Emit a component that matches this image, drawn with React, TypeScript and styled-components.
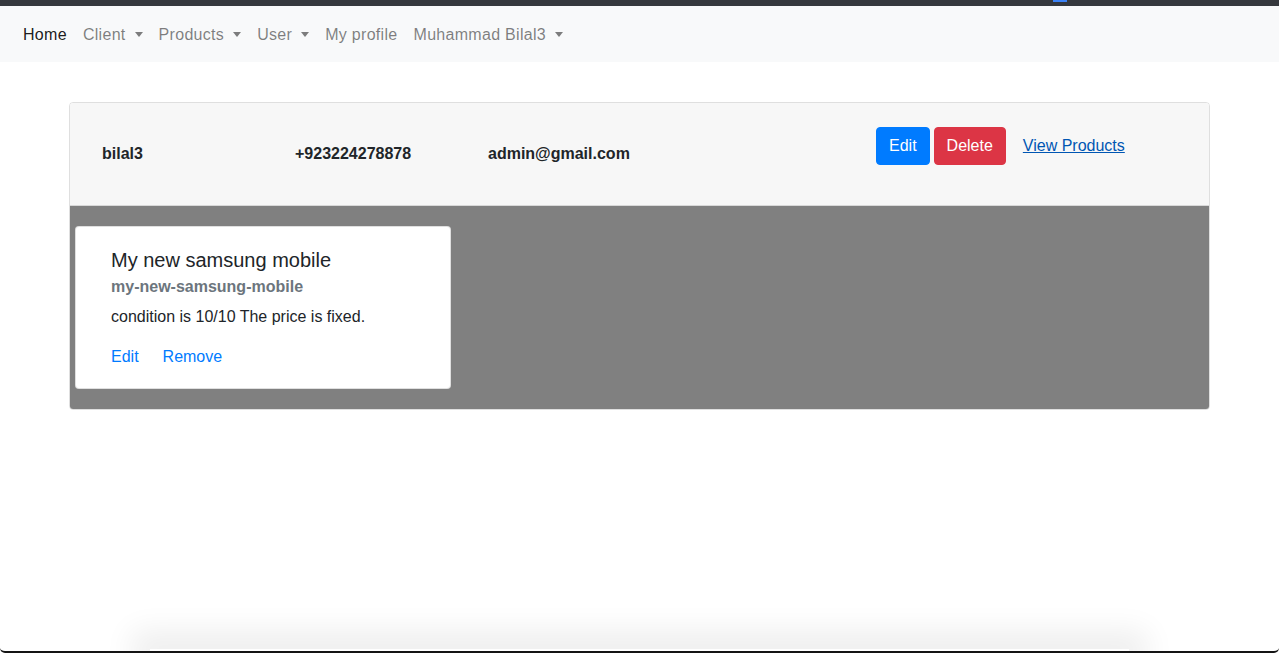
import React from 'react';
import styled, { createGlobalStyle } from 'styled-components';

const GlobalStyle = createGlobalStyle`
  html, body {
    margin: 0;
    padding: 0;
    background: #ffffff;
  }
  body {
    font-family: "Liberation Sans", Arial, sans-serif;
    font-size: 16px;
    line-height: 1.5;
    color: #212529;
  }
`;

const Page = styled.div`
  height: 653px;
  box-sizing: border-box;
  display: flex;
  flex-direction: column;
  overflow: hidden;
  border-bottom: 2px solid #141414;
  border-radius: 0 0 5px 5px;
`;

const TopStrip = styled.div`
  height: 6px;
  background: #35383d;
  display: flex;
  flex-shrink: 0;
`;

const TabMarker = styled.span`
  margin-left: 1053px;
  width: 14px;
  height: 2px;
  background: #3b82f6;
`;

const Navbar = styled.nav`
  height: 56px;
  background: #f8f9fa;
  display: flex;
  align-items: center;
  padding: 1px 15px 0;
  box-sizing: border-box;
  flex-shrink: 0;
`;

const NavLink = styled.a<{ $active?: boolean }>`
  display: flex;
  align-items: center;
  padding: 8px;
  letter-spacing: 0.3px;
  color: ${(p) => (p.$active ? 'rgba(0, 0, 0, 0.9)' : 'rgba(0, 0, 0, 0.5)')};
  text-decoration: none;
  cursor: pointer;
`;

const Caret = styled.span`
  margin-left: 9px;
  width: 0;
  height: 0;
  border-top: 5px solid currentColor;
  border-left: 4.5px solid transparent;
  border-right: 4.5px solid transparent;
`;

const Main = styled.main`
  flex: 1;
  padding-top: 40px;
`;

const Card = styled.section`
  width: 1141px;
  margin: 0 auto;
  box-sizing: border-box;
  border: 1px solid rgba(0, 0, 0, 0.125);
  border-radius: 4px;
  overflow: hidden;
`;

const CardHeader = styled.header`
  height: 103px;
  box-sizing: border-box;
  background: #f7f7f7;
  border-bottom: 1px solid rgba(0, 0, 0, 0.125);
  display: flex;
  align-items: center;
  padding-left: 32px;
`;

const Field = styled.strong<{ $width: number }>`
  width: ${(p) => p.$width}px;
  font-weight: 700;
  color: #212529;
`;

const Actions = styled.div`
  align-self: flex-start;
  margin-top: 24px;
  display: flex;
  align-items: center;
  gap: 4px;
`;

const Button = styled.button<{ $variant: 'primary' | 'danger' }>`
  font-family: inherit;
  font-size: 16px;
  line-height: 24px;
  padding: 6px 12px;
  border-radius: 4px;
  color: #ffffff;
  border: 1px solid ${(p) => (p.$variant === 'primary' ? '#007bff' : '#dc3545')};
  background: ${(p) => (p.$variant === 'primary' ? '#007bff' : '#dc3545')};
  cursor: pointer;
`;

const ViewLink = styled.a`
  margin-left: 13px;
  color: #0056b3;
  text-decoration: underline;
  cursor: pointer;
`;

const CardBody = styled.div`
  background: #808080;
  padding: 20px 5px;
  display: flex;
  flex-wrap: wrap;
  gap: 20px;
`;

const ProductCard = styled.article`
  width: 376px;
  box-sizing: border-box;
  background: #ffffff;
  border: 1px solid rgba(0, 0, 0, 0.125);
  border-radius: 4px;
  padding: 21px 35px 19px;
`;

const Title = styled.h5`
  margin: 0 0 3px;
  font-size: 20px;
  font-weight: 400;
  line-height: 24px;
  color: #212529;
`;

const Subtitle = styled.h6`
  margin: 0 0 6px;
  font-size: 16px;
  font-weight: 700;
  line-height: 24px;
  color: #6c757d;
`;

const Text = styled.p`
  margin: 0 0 16px;
  line-height: 24px;
`;

const LinkRow = styled.div`
  display: flex;
  gap: 24px;
  line-height: 24px;
`;

const CardLink = styled.a`
  color: #007bff;
  text-decoration: none;
  cursor: pointer;
`;

const BottomGlow = styled.div`
  height: 2px;
  margin: 0 150px;
  flex-shrink: 0;
  box-shadow: 0 0 30px 18px rgba(0, 0, 0, 0.07);
`;

const navItems = [
  { label: 'Home', active: true },
  { label: 'Client', dropdown: true },
  { label: 'Products', dropdown: true },
  { label: 'User', dropdown: true },
  { label: 'My profile' },
  { label: 'Muhammad Bilal3', dropdown: true },
];

const App: React.FunctionComponent = () => (
  <>
    <GlobalStyle />
    <Page>
      <TopStrip>
        <TabMarker />
      </TopStrip>
      <Navbar>
        {navItems.map((item) => (
          <NavLink key={item.label} $active={item.active}>
            {item.label}
            {item.dropdown && <Caret />}
          </NavLink>
        ))}
      </Navbar>
      <Main>
        <Card>
          <CardHeader>
            <Field $width={193}>bilal3</Field>
            <Field $width={193}>+923224278878</Field>
            <Field $width={388}>admin@gmail.com</Field>
            <Actions>
              <Button $variant="primary">Edit</Button>
              <Button $variant="danger">Delete</Button>
              <ViewLink>View Products</ViewLink>
            </Actions>
          </CardHeader>
          <CardBody>
            <ProductCard>
              <Title>My new samsung mobile</Title>
              <Subtitle>my-new-samsung-mobile</Subtitle>
              <Text>condition is 10/10 The price is fixed.</Text>
              <LinkRow>
                <CardLink>Edit</CardLink>
                <CardLink>Remove</CardLink>
              </LinkRow>
            </ProductCard>
          </CardBody>
        </Card>
      </Main>
      <BottomGlow />
    </Page>
  </>
);

export default App;
